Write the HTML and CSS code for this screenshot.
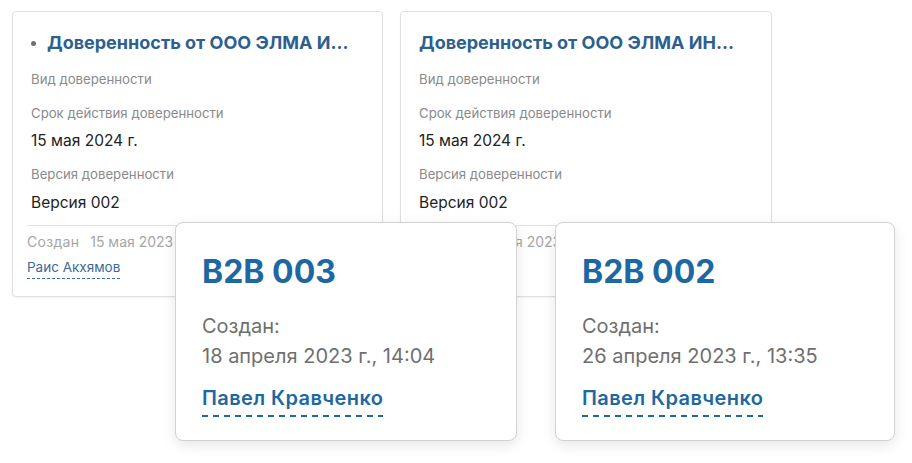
FILE: index.html
```html
<!DOCTYPE html>
<html lang="ru">
<head>
<meta charset="utf-8">
<link rel="stylesheet" href="styles.css">
</head>
<body>
<div class="stage">
  <div class="cards">
    <div class="card">
      <div class="card-body">
        <div class="card-title"><span class="dot"></span>Доверенность от ООО ЭЛМА И...</div>
        <div class="label first">Вид доверенности</div>
        <div class="label">Срок действия доверенности</div>
        <div class="value">15 мая 2024 г.</div>
        <div class="label">Версия доверенности</div>
        <div class="value">Версия 002</div>
      </div>
      <div class="card-foot">
        <div class="created"><span class="c-lbl">Создан</span> <span class="c-val">15 мая 2023 г.</span></div>
        <div class="author"><span class="author-name">Раис Акхямов</span></div>
      </div>
    </div>
    <div class="card">
      <div class="card-body">
        <div class="card-title">Доверенность от ООО ЭЛМА ИН...</div>
        <div class="label first">Вид доверенности</div>
        <div class="label">Срок действия доверенности</div>
        <div class="value">15 мая 2024 г.</div>
        <div class="label">Версия доверенности</div>
        <div class="value">Версия 002</div>
      </div>
      <div class="card-foot">
        <div class="created"><span class="c-lbl">Создан</span> <span class="c-val">15 мая 2023 г.</span></div>
        <div class="author"><span class="author-name">Раис Акхямов</span></div>
      </div>
    </div>
  </div>

  <div class="popup popup-left">
    <div class="pop-title">B2B 003</div>
    <div class="pop-lbl">Создан:</div>
    <div class="pop-date">18 апреля 2023 г., 14:04</div>
    <div class="pop-author"><span class="pop-name">Павел Кравченко</span></div>
  </div>
  <div class="popup popup-right">
    <div class="pop-title">B2B 002</div>
    <div class="pop-lbl">Создан:</div>
    <div class="pop-date">26 апреля 2023 г., 13:35</div>
    <div class="pop-author"><span class="pop-name">Павел Кравченко</span></div>
  </div>
</div>
</body>
</html>
```

FILE: styles.css
```css
html, body {
  margin: 0;
  padding: 0;
  background: #ffffff;
}
body {
  font-family: Inter, "Noto Sans", "DejaVu Sans", sans-serif;
  width: 912px;
  height: 463px;
  overflow: hidden;
}
.stage {
  position: relative;
  width: 912px;
  height: 463px;
}
.cards {
  display: flex;
  gap: 17px;
  padding: 11px 0 0 12px;
}
.card {
  box-sizing: border-box;
  width: 371px;
  height: 286px;
  border: 1px solid #e0e0e0;
  border-radius: 4px;
  background: #fff;
  box-shadow: 0 1px 2px rgba(0,0,0,0.05);
}
.card + .card { width: 372px; }
.card-body {
  padding: 20px 18px 12px 18px;
}
.card-title {
  font-size: 18px;
  line-height: 22px;
  font-weight: 700;
  color: #2d5f8f;
  white-space: nowrap;
  display: flex;
  align-items: center;
}
.dot {
  width: 5px;
  height: 5px;
  border-radius: 50%;
  background: #707070;
  margin: 0 11px 0 0;
  flex: none;
}
.label {
  font-size: 13.2px;
  line-height: 18px;
  color: #8a8a8a;
  margin-top: 16px;
}
.value {
  font-size: 15.5px;
  line-height: 20px;
  color: #222;
  margin-top: 9px;
}
.label + .value { margin-top: 9px; }
.value + .label { margin-top: 14px; }
.card-body .value:last-child { margin-top: 10px; }
.card-foot {
  margin-left: 14px;
  border-top: 1px solid #e2e2e2;
  padding-top: 7px;
}
.created {
  font-size: 14px;
  line-height: 18px;
  color: #a6a6a6;
  white-space: nowrap;
}
.c-lbl { margin-right: 7px; letter-spacing: 0.3px; }
.author {
  margin-top: 7px;
  font-size: 13.5px;
  line-height: 18px;
}
.author-name {
  color: #3a6a99;
  padding-bottom: 4px;
  background-image: linear-gradient(to right, #3a6a99 0 3px, transparent 3px 5px);
  background-size: 5px 1px;
  background-repeat: repeat-x;
  background-position: left bottom;
}

.popup {
  position: absolute;
  top: 222px;
  box-sizing: border-box;
  height: 219px;
  padding: 30px 26px 0 26px;
  background: #fff;
  border: 1px solid #d2d2d2;
  border-radius: 8px;
  box-shadow: 0 4px 14px rgba(0,0,0,0.10);
}
.popup-left { left: 175px; width: 342px; }
.popup-right { left: 555px; width: 340px; }
.pop-title {
  font-size: 32px;
  line-height: 38px;
  font-weight: 700;
  color: #1d68a2;
}
.pop-lbl {
  margin-top: 20px;
  font-size: 20px;
  line-height: 30px;
  color: #6f6f6f;
}
.pop-date {
  font-size: 20px;
  line-height: 30px;
  color: #6f6f6f;
  white-space: nowrap;
}
.pop-author {
  margin-top: 13px;
  font-size: 20px;
  line-height: 28px;
}
.pop-name {
  display: inline-block;
  font-weight: 600;
  letter-spacing: 0.4px;
  color: #1d68a2;
  padding-bottom: 5px;
  background-image: linear-gradient(to right, #1d68a2 0 6px, transparent 6px 11px);
  background-size: 11px 2px;
  background-repeat: repeat-x;
  background-position: left bottom;
}
```
